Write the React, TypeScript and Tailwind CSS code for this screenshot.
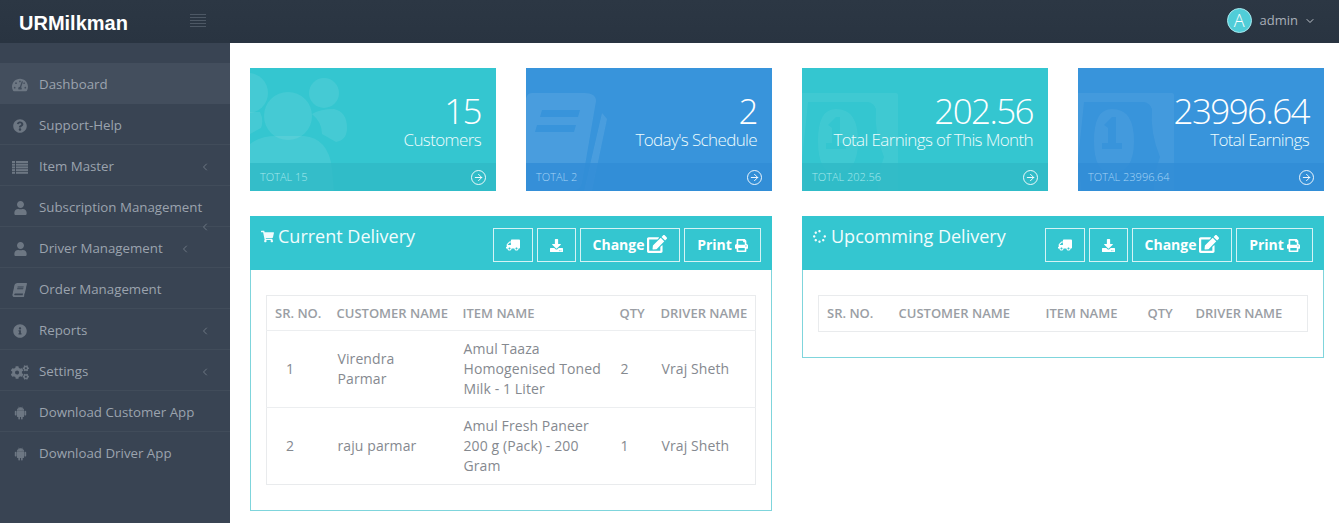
import React from "react";
import { FaTachometerAlt, FaQuestionCircle, FaUser, FaBook, FaInfoCircle, FaCogs, FaTruck, FaDownload, FaEdit, FaPrint, FaShoppingCart, FaSpinner } from "react-icons/fa";
import { BsAndroid2 } from "react-icons/bs";
import { FiChevronLeft, FiChevronDown, FiArrowRight } from "react-icons/fi";

function ListIcon({ className }: { className?: string }) {
  return (
    <svg viewBox="0 0 16 13" className={className} fill="currentColor">
      {[0, 2.7, 5.4, 8.1, 10.8].map((y) => (
        <g key={y}>
          <rect x="0" y={y} width="3" height="2" />
          <rect x="4" y={y} width="12" height="2" />
        </g>
      ))}
    </svg>
  );
}

const iconBase = "text-[#6d7783]";
const menu = [
  { label: "Dashboard", Icon: FaTachometerAlt, active: true, ic: "w-[16px] h-[16px]" },
  { label: "Support-Help", Icon: FaQuestionCircle, ic: "w-[14px] h-[14px] ml-[1px]" },
  { label: "Item Master", Icon: ListIcon, chev: "right", ic: "w-[16px] h-[13px]" },
  { label: "Subscription Management", Icon: FaUser, chev: "low", ic: "w-[13px] h-[14px] ml-[2px]" },
  { label: "Driver Management", Icon: FaUser, chev: "inline", ic: "w-[13px] h-[14px] ml-[2px]" },
  { label: "Order Management", Icon: FaBook, ic: "w-[13px] h-[14px] ml-[1px] -skew-x-12" },
  { label: "Reports", Icon: FaInfoCircle, chev: "right", ic: "w-[14px] h-[14px] ml-[1px]" },
  { label: "Settings", Icon: FaCogs, chev: "right", ic: "w-[18px] h-[15px] -ml-[1px]" },
  { label: "Download Customer App", Icon: BsAndroid2, ic: "w-[13px] h-[14px] ml-[2px]" },
  { label: "Download Driver App", Icon: BsAndroid2, last: true, ic: "w-[13px] h-[14px] ml-[2px]" },
];

function People() {
  return (
    <svg viewBox="0 0 110 123" className="absolute left-0 top-0 w-[110px] h-[123px]" fill="white" fillOpacity="0.085">
      <circle cx="-2" cy="25" r="20" />
      <circle cx="74" cy="25" r="15" />
      <path d="M62 46 Q70 41 84 41 Q97 44 97 60 Q97 72 86 74 L72 66 Q72 54 62 46Z" />
      <circle cx="38" cy="48" r="24" />
      <path d="M0 76 Q10 68 26 68 L54 68 Q78 70 82 100 L84 123 L0 123Z" />
      <path d="M0 44 L10 44 Q14 52 11 60 L0 66Z" />
    </svg>
  );
}
function Notebook() {
  return (
    <svg viewBox="0 0 85 100" className="absolute left-0 top-[25px] w-[85px] h-[100px]" fill="white" fillOpacity="0.09">
      <path fillRule="evenodd" d="M6 0 L58 0 Q70 0 70 8 L56 90 Q54 98 44 98 L0 98 L0 8 Q0 0 6 0Z M16 17 L54 17 L52 24 L14 24Z M11 32 L50 32 L48 39 L9 39Z" />
      <path d="M76 20 L81 26 L66 98 L58 98Z" />
    </svg>
  );
}
function Bill() {
  return (
    <svg viewBox="0 0 96 98" className="absolute left-0 top-[25px] w-[96px] h-[98px]" fill="white" fillOpacity="0.06">
      <path fillRule="evenodd" d="M0 0 L94 0 Q96 0 96 2 L96 98 L76 98 Q74 86 82 64 Q72 40 74 16 Q72 10 66 9 L6 9 Q4 30 0 66Z M0 72 Q3 80 3 98 L0 98Z" />
      <path fillRule="evenodd" d="M34 16 Q56 16 56 48 Q56 80 34 80 Q16 80 16 48 Q16 16 34 16Z M34 24 L26 32 L30 35 L30 50 L24 50 L24 56 L44 56 L44 50 L38 50 L38 24Z" />
    </svg>
  );
}

function StatCard({ value, label, total, tone, art }: { value: string; label: string; total: string; tone: "teal" | "blue"; art: React.ReactNode }) {
  const teal = tone === "teal";
  return (
    <div className={`relative h-[123px] overflow-hidden flex flex-col ${teal ? "bg-[#34c6d0]" : "bg-[#3894db]"}`}>
      {art}
      <div className="relative flex-1 pr-[15px] pt-[25px] text-right text-white">
        <div className="text-[35px] leading-[36px] font-light tracking-[-1.6px]">{value}</div>
        <div className="text-[17px] leading-[22px] font-light tracking-[-0.62px] text-[#eefcfd]">{label}</div>
      </div>
      <div className={`relative h-[28px] flex items-center justify-between pl-[10px] pr-[10px] ${teal ? "bg-[#2fb9c5]/80" : "bg-[#318cd6]/80"}`}>
        <span className={`text-[11px] font-light ${teal ? "text-[#a5e8ec]" : "text-[#a4d3f5]"}`}>{total}</span>
        <span className="w-[15px] h-[15px] rounded-full border border-white/90 flex items-center justify-center text-white">
          <FiArrowRight className="w-[11px] h-[11px]" />
        </span>
      </div>
    </div>
  );
}

function Btn({ children, className = "" }: { children: React.ReactNode; className?: string }) {
  return (
    <button className={`h-[34px] border border-[#d5f3f5] flex items-center justify-center gap-[3px] text-white text-[14px] font-bold ${className}`}>
      {children}
    </button>
  );
}

function PanelHeader({ title, icon, gap }: { title: string; icon: React.ReactNode; gap: string }) {
  return (
    <div className="h-[54px] bg-[#34c6d0] flex items-start justify-between pl-[11px] pr-[11px] mx-[-1px] mt-[-1px]">
      <div className={`flex items-center h-[40px] text-[18px] font-normal text-[#f0fcfd] ${gap}`}>
        {icon}
        <span>{title}</span>
      </div>
      <div className="flex gap-[4px] mt-[12px]">
        <Btn className="w-[40px]"><FaTruck className="w-[14px] h-[14px] -scale-x-100" /></Btn>
        <Btn className="w-[39px]"><FaDownload className="w-[13px] h-[13px]" /></Btn>
        <Btn className="w-[100px] pb-[2px]">Change <FaEdit className="w-[20px] h-[18px]" /></Btn>
        <Btn className="w-[77px] pb-[2px]">Print <FaPrint className="w-[13px] h-[13px] mt-[2px]" /></Btn>
      </div>
    </div>
  );
}

const thClass = "text-left text-[13px] font-semibold text-[#9a9ea4] whitespace-nowrap px-[8px]";
const tdClass = "text-[14px] leading-[20px] text-[#85898f] pl-[9px] pr-[7px] py-[8px] align-middle tracking-[0.1px]";

export default function App() {
  return (
    <div className="w-[1339px] h-[523px] overflow-hidden flex flex-col bg-white font-['Open_Sans',sans-serif]">
      <header className="h-[43px] shrink-0 bg-gradient-to-b from-[#2c3744] to-[#293441] flex items-center">
        <div className="w-[230px] flex items-center pl-[19px] pt-[3px]">
          <span className="font-['Liberation_Sans',sans-serif] font-bold text-[20px] text-white">URMilkman</span>
          <div className="ml-[62px] w-[16px] flex flex-col gap-[2px] -mt-[6px]">
            <span className="h-px bg-[#4d5865]" />
            <span className="h-px bg-[#4d5865]" />
            <span className="h-px bg-[#4d5865]" />
            <span className="h-px bg-[#4d5865]" />
            <span className="h-px bg-[#4d5865]" />
          </div>
        </div>
        <div className="ml-auto flex items-center pr-[23px] pb-[2px]">
          <span className="w-[25px] h-[25px] rounded-full bg-[#50cdd8] border border-[#a8e8ee] flex items-center justify-center text-white text-[18px] font-light">A</span>
          <span className="ml-[8px] text-[13px] text-[#a9b0b9]">admin</span>
          <FiChevronDown className="ml-[6px] w-[12px] h-[12px] text-[#c0c5cc]" />
        </div>
      </header>
      <div className="flex-1 flex min-h-0">
        <aside className="w-[230px] shrink-0 bg-[#394453] pt-[20px] relative">
          <nav>
            {menu.map(({ label, Icon, active, last, chev, ic }) => (
              <div key={label} className={`relative h-[41px] flex items-center ${active ? "bg-[#434e5d] pt-[2px]" : last ? "pt-[2px]" : "border-b border-[#414c5a] pt-[4px]"}`}>
                <span className="w-[39px] pl-[12px] shrink-0">
                  <Icon className={`${iconBase} ${ic}`} />
                </span>
                <span className="text-[13.3px] text-[#9ba3ae] whitespace-nowrap">{label}</span>
                {chev === "inline" && <FiChevronLeft className="ml-[16px] w-[12px] h-[12px] text-[#6d7783]" />}
                {chev === "right" && <FiChevronLeft className="absolute left-[199px] top-[16px] w-[12px] h-[12px] text-[#6d7783]" />}
                {chev === "low" && <FiChevronLeft className="absolute left-[199px] top-[35px] w-[12px] h-[12px] text-[#6d7783]" />}
              </div>
            ))}
          </nav>
        </aside>
        <main className="flex-1 min-w-0 pl-[20px] pr-[15px] pt-[25px]">
          <div className="grid grid-cols-4 gap-[30px]">
            <StatCard value="15" label="Customers" total="TOTAL 15" tone="teal" art={<People />} />
            <StatCard value="2" label="Today's Schedule" total="TOTAL 2" tone="blue" art={<Notebook />} />
            <StatCard value="202.56" label="Total Earnings of This Month" total="TOTAL 202.56" tone="teal" art={<Bill />} />
            <StatCard value="23996.64" label="Total Earnings" total="TOTAL 23996.64" tone="blue" art={<Bill />} />
          </div>
          <div className="grid grid-cols-2 gap-[30px] mt-[25px] items-start">
            <section className="border border-[#7fd5dc] h-[295px]">
              <PanelHeader title="Current Delivery" gap="gap-[4px]" icon={<FaShoppingCart className="w-[13px] h-[13px]" />} />
              <div className="px-[15px] pt-[25px]">
                <table className="w-full border border-[#e9ebed] border-collapse table-fixed">
                  <colgroup>
                    <col className="w-[62px]" /><col className="w-[126px]" /><col className="w-[157px]" /><col className="w-[41px]" /><col />
                  </colgroup>
                  <thead>
                    <tr className="h-[35px] border-b border-[#eceef0]">
                      <th className={`${thClass} pt-[2px]`}>SR. NO.</th><th className={`${thClass} pt-[2px]`}>CUSTOMER NAME</th><th className={`${thClass} pt-[2px]`}>ITEM NAME</th><th className={`${thClass} pt-[2px]`}>QTY</th><th className={`${thClass} pt-[2px]`}>DRIVER NAME</th>
                    </tr>
                  </thead>
                  <tbody>
                    <tr className="h-[77px] border-b border-[#eceef0]">
                      <td className={`${tdClass} pl-[19px]`}>1</td><td className={tdClass}>Virendra<br />Parmar</td><td className={tdClass}>Amul Taaza Homogenised Toned Milk - 1 Liter</td><td className={tdClass}>2</td><td className={tdClass}>Vraj Sheth</td>
                    </tr>
                    <tr className="h-[77px]">
                      <td className={`${tdClass} pl-[19px]`}>2</td><td className={tdClass}>raju parmar</td><td className={tdClass}>Amul Fresh Paneer 200 g (Pack) - 200 Gram</td><td className={tdClass}>1</td><td className={tdClass}>Vraj Sheth</td>
                    </tr>
                  </tbody>
                </table>
              </div>
            </section>
            <section className="border border-[#7fd5dc] h-[142px]">
              <PanelHeader title="Upcomming Delivery" gap="gap-[5px]" icon={<FaSpinner className="w-[13px] h-[13px]" />} />
              <div className="px-[15px] pt-[25px]">
                <table className="w-full border border-[#e9ebed] border-collapse table-fixed">
                  <colgroup>
                    <col className="w-[72px]" /><col className="w-[147px]" /><col className="w-[102px]" /><col className="w-[48px]" /><col />
                  </colgroup>
                  <thead>
                    <tr className="h-[36px]">
                      <th className={thClass}>SR. NO.</th><th className={thClass}>CUSTOMER NAME</th><th className={thClass}>ITEM NAME</th><th className={thClass}>QTY</th><th className={thClass}>DRIVER NAME</th>
                    </tr>
                  </thead>
                </table>
              </div>
            </section>
          </div>
        </main>
      </div>
    </div>
  );
}
